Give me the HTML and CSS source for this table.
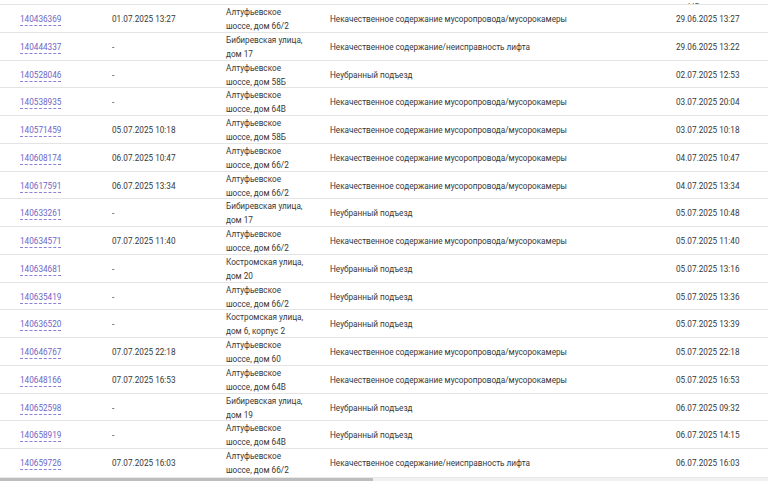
FILE: index.html
```html
<!DOCTYPE html>
<html lang="ru">
<head>
<meta charset="utf-8">
<link rel="stylesheet" href="styles.css">
</head>
<body>
<div class="page">
  <div class="head-tail"><span class="head-text">ыв</span></div>
  <div class="list">
    <div class="row"><div class="c id"><a href="#">140436369</a></div><div class="c dt">01.07.2025 13:27</div><div class="c addr"><span>Алтуфьевское шоссе, дом 66/2</span></div><div class="c desc">Некачественное содержание мусоропровода/мусорокамеры</div><div class="c created">29.06.2025 13:27</div></div>
    <div class="row"><div class="c id"><a href="#">140444337</a></div><div class="c dt">-</div><div class="c addr"><span>Бибиревская улица, дом 17</span></div><div class="c desc">Некачественное содержание/неисправность лифта</div><div class="c created">29.06.2025 13:22</div></div>
    <div class="row"><div class="c id"><a href="#">140528046</a></div><div class="c dt">-</div><div class="c addr"><span>Алтуфьевское шоссе, дом 58Б</span></div><div class="c desc">Неубранный подъезд</div><div class="c created">02.07.2025 12:53</div></div>
    <div class="row"><div class="c id"><a href="#">140538935</a></div><div class="c dt">-</div><div class="c addr"><span>Алтуфьевское шоссе, дом 64В</span></div><div class="c desc">Некачественное содержание мусоропровода/мусорокамеры</div><div class="c created">03.07.2025 20:04</div></div>
    <div class="row"><div class="c id"><a href="#">140571459</a></div><div class="c dt">05.07.2025 10:18</div><div class="c addr"><span>Алтуфьевское шоссе, дом 58Б</span></div><div class="c desc">Некачественное содержание мусоропровода/мусорокамеры</div><div class="c created">03.07.2025 10:18</div></div>
    <div class="row"><div class="c id"><a href="#">140608174</a></div><div class="c dt">06.07.2025 10:47</div><div class="c addr"><span>Алтуфьевское шоссе, дом 66/2</span></div><div class="c desc">Некачественное содержание мусоропровода/мусорокамеры</div><div class="c created">04.07.2025 10:47</div></div>
    <div class="row"><div class="c id"><a href="#">140617591</a></div><div class="c dt">06.07.2025 13:34</div><div class="c addr"><span>Алтуфьевское шоссе, дом 66/2</span></div><div class="c desc">Некачественное содержание мусоропровода/мусорокамеры</div><div class="c created">04.07.2025 13:34</div></div>
    <div class="row"><div class="c id"><a href="#">140633261</a></div><div class="c dt">-</div><div class="c addr"><span>Бибиревская улица, дом 17</span></div><div class="c desc">Неубранный подъезд</div><div class="c created">05.07.2025 10:48</div></div>
    <div class="row"><div class="c id"><a href="#">140634571</a></div><div class="c dt">07.07.2025 11:40</div><div class="c addr"><span>Алтуфьевское шоссе, дом 66/2</span></div><div class="c desc">Некачественное содержание мусоропровода/мусорокамеры</div><div class="c created">05.07.2025 11:40</div></div>
    <div class="row"><div class="c id"><a href="#">140634681</a></div><div class="c dt">-</div><div class="c addr"><span>Костромская улица, дом 20</span></div><div class="c desc">Неубранный подъезд</div><div class="c created">05.07.2025 13:16</div></div>
    <div class="row"><div class="c id"><a href="#">140635419</a></div><div class="c dt">-</div><div class="c addr"><span>Алтуфьевское шоссе, дом 66/2</span></div><div class="c desc">Неубранный подъезд</div><div class="c created">05.07.2025 13:36</div></div>
    <div class="row"><div class="c id"><a href="#">140636520</a></div><div class="c dt">-</div><div class="c addr"><span>Костромская улица, дом 6, корпус 2</span></div><div class="c desc">Неубранный подъезд</div><div class="c created">05.07.2025 13:39</div></div>
    <div class="row"><div class="c id"><a href="#">140646767</a></div><div class="c dt">07.07.2025 22:18</div><div class="c addr"><span>Алтуфьевское шоссе, дом 60</span></div><div class="c desc">Некачественное содержание мусоропровода/мусорокамеры</div><div class="c created">05.07.2025 22:18</div></div>
    <div class="row"><div class="c id"><a href="#">140648166</a></div><div class="c dt">07.07.2025 16:53</div><div class="c addr"><span>Алтуфьевское шоссе, дом 64В</span></div><div class="c desc">Некачественное содержание мусоропровода/мусорокамеры</div><div class="c created">05.07.2025 16:53</div></div>
    <div class="row"><div class="c id"><a href="#">140652598</a></div><div class="c dt">-</div><div class="c addr"><span>Бибиревская улица, дом 19</span></div><div class="c desc">Неубранный подъезд</div><div class="c created">06.07.2025 09:32</div></div>
    <div class="row"><div class="c id"><a href="#">140658919</a></div><div class="c dt">-</div><div class="c addr"><span>Алтуфьевское шоссе, дом 64В</span></div><div class="c desc">Неубранный подъезд</div><div class="c created">06.07.2025 14:15</div></div>
    <div class="row last"><div class="c id"><a href="#">140659726</a></div><div class="c dt">07.07.2025 16:03</div><div class="c addr"><span>Алтуфьевское шоссе, дом 66/2</span></div><div class="c desc">Некачественное содержание/неисправность лифта</div><div class="c created">06.07.2025 16:03</div></div>
  </div>
  <div class="hscroll"><div class="thumb"></div></div>
</div>
</body>
</html>
```
FILE: styles.css
```css
* { box-sizing: border-box; }
html, body {
  margin: 0;
  padding: 0;
  background: #ffffff;
}
body {
  font-family: Roboto, "Noto Sans", "Liberation Sans", sans-serif;
  font-size: 8.2px;
  color: #383838;
  width: 768px;
  height: 481px;
  overflow: hidden;
}
.page {
  display: flex;
  flex-direction: column;
  height: 481px;
}
.head-tail {
  height: 4px;
  overflow: hidden;
  display: flex;
  align-items: flex-end;
  padding-left: 688px;
}
.head-text {
  display: block;
  line-height: 10px;
  font-size: 8.2px;
  color: #555;
  margin-bottom: -6px;
  letter-spacing: 0.5px;
}
.list {
  border-top: 1px solid #e4e4e4;
}
.row {
  display: grid;
  grid-template-columns: 112px 114px 104px 346px 92px;
  align-items: center;
  height: 27.75px;
  border-bottom: 1px solid #e4e4e4;
}
.row.last {
  border-bottom: none;
}
.c {
  white-space: nowrap;
  line-height: 12px;
}
.id {
  padding-left: 20px;
}
.id a {
  color: #6e66c6;
  text-decoration: none;
  border-bottom: 1px dashed #8a82d6;
  padding-bottom: 1px;
}
.addr {
  white-space: normal;
}
.addr span {
  display: block;
  width: 80px;
  line-height: 14px;
}
.hscroll {
  margin-top: auto;
  height: 4px;
  background: #f1f1f1;
  border-top: 1px solid #e8e8e8;
}
.thumb {
  width: 373px;
  height: 3px;
  background: #bdbdbd;
}
```
